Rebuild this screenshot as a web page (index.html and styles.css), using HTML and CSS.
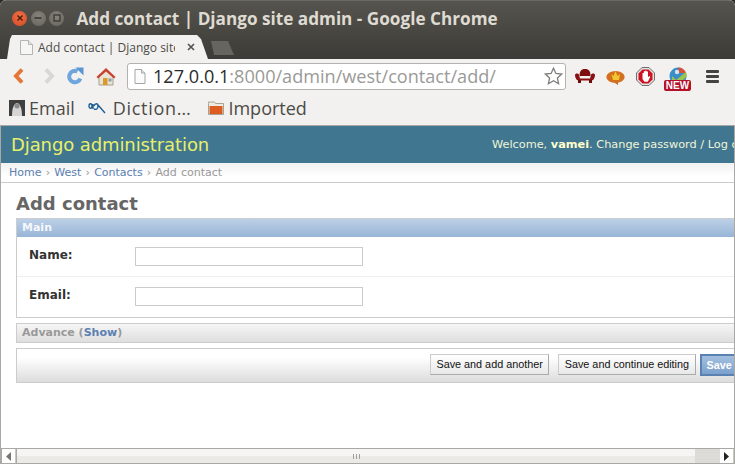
FILE: index.html
```html
<!DOCTYPE html>
<html lang="en">
<head>
    <meta charset="UTF-8">
    <title>Add contact | Django site admin - Google Chrome</title>
    <link rel="stylesheet" href="styles.css">
</head>
<body>
<div class="window">
    <div class="titlebar">
        <span class="win-btn win-close"><svg width="8" height="8" viewBox="0 0 8 8"><path d="M1.5 1.5l5 5M6.5 1.5l-5 5" stroke="#4a1a08" stroke-width="1.4"/></svg></span>
        <span class="win-btn win-other"><svg width="8" height="8" viewBox="0 0 8 8"><path d="M0.5 4h7" stroke="#33322e" stroke-width="1.4"/></svg></span>
        <span class="win-btn win-other"><svg width="8" height="8" viewBox="0 0 8 8"><rect x="1" y="1" width="6" height="6" fill="none" stroke="#33322e" stroke-width="1.2"/></svg></span>
        <span class="win-title">Add contact | Django site admin - Google Chrome</span>
    </div>
    <div class="tabstrip">
        <div class="tab">
            <svg class="page-icon" width="15" height="17" viewBox="0 0 15 17"><path d="M1.5 1.5h8l4 4v10h-12z" fill="#f6f6f5" stroke="#b5b5b2"/><path d="M9.5 1.5v4h4" fill="#e2e2e0" stroke="#b5b5b2"/></svg>
            <span class="tab-title">Add contact | Django site</span>
            <svg class="tab-x" width="8" height="8" viewBox="0 0 8 8"><path d="M1 1l6 6M7 1l-6 6" stroke="#55544f" stroke-width="1.7"/></svg>
        </div>
        <div class="newtab"></div>
    </div>
    <div class="toolbar">
        <svg class="nav-icon" width="14" height="18" viewBox="0 0 14 18"><path d="M10 2.500L4 9l6 6.500" fill="none" stroke="#e5763a" stroke-width="4"/></svg>
        <svg class="nav-icon nav-forward" width="14" height="18" viewBox="0 0 14 18"><path d="M4 2.500L10 9l-6 6.500" fill="none" stroke="#d8d7d4" stroke-width="4"/></svg>
        <svg class="nav-icon nav-reload" width="17" height="18" viewBox="0 0 17 18"><path d="M13.300 11.500A5.700 5.700 0 1 1 10.500 4.500" fill="none" stroke="#6ea5dc" stroke-width="4"/><path d="M8.500 0.500h8v8z" fill="#5b96d2"/></svg>
        <svg class="nav-icon nav-home" width="20" height="19" viewBox="0 0 20 19"><path d="M3 8.500L10 3l7 5.500V18H3z" fill="#e9e4d4" stroke="#a79f8b"/><path d="M7 11h4.500v7H7z" fill="#d99a2b"/><path d="M12.500 11.500h3v3h-3z" fill="#8f9aa3"/><path d="M0.500 10L10 1l9.500 9-1.500 1.500L10 4.500 2 11.500z" fill="#c9412f"/></svg>
        <div class="urlbar">
            <svg class="url-page" width="12" height="15" viewBox="0 0 12 15"><path d="M1 .5h6.500l3.500 3.500v10.500H1z" fill="#fbfbfb" stroke="#a5a5a2"/><path d="M7.500 .5v3.500h3.500" fill="#e6e6e4" stroke="#a5a5a2"/></svg>
            <span class="url-text"><span class="url-host">127.0.0.1</span>:8000/admin/west/contact/add/</span>
            <svg class="url-star" width="19" height="18" viewBox="0 0 19 18"><path d="M9.500 1.200l2.400 5.300 5.800.6-4.300 3.900 1.200 5.700-5.100-2.900-5.100 2.900 1.200-5.700L1.300 7.100l5.800-.6z" fill="#fff" stroke="#7d7d7a" stroke-width="1.300"/></svg>
        </div>
        <div class="ext-icons">
            <svg width="20" height="14" viewBox="0 0 20 14"><path d="M4.500 7C4.500 1 7 0 10 0s5.500 1 5.500 7z" fill="#7d0f0f"/><path d="M0 6c0-2 4-2 4 0l1 3.500h10L16 6c0-2 4-2 4 0 0 2-1 5-3 5.500H3C1 11 0 8 0 6z" fill="#8b1212"/><path d="M3 11h3v3H3zM14 11h3v3h-3z" fill="#6e0b0b"/></svg>
            <svg width="19" height="17" viewBox="0 0 19 17"><ellipse cx="9.500" cy="9" rx="9.200" ry="6" fill="#d3701f"/><path d="M9 15l3 2 0-3z" fill="#c7661c"/><path d="M5.500 6l2 2 2-5 2 5 2.500-2-1 6h-6z" fill="#f3c52e"/></svg>
            <svg width="19" height="19" viewBox="0 0 19 19"><path d="M6 .5h7L18.500 6v7L13 18.500H6L.5 13V6z" fill="#e2e2e2" stroke="#6f6f6f"/><path d="M6.500 2.500h6l4 4v6l-4 4h-6l-4-4v-6z" fill="#cf1020"/><path d="M6.500 9V6h1.300v3V4.300h1.400V9V3.800h1.400V9V4.500h1.400v5.800l1.300-1.300 1 .8-2.400 5H8.500L6.500 12z" fill="#fff"/></svg>
            <span class="ext-new">
                <svg width="20" height="14" viewBox="0 0 20 14"><circle cx="10" cy="9" r="8.500" fill="#3a8dc9"/><path d="M10 .5a8.500 8.500 0 0 1 8 5.500L11 6z" fill="#d7503a"/><path d="M4 9l4 4 10-8 1 4-5 5H4z" fill="#9ec44a"/><circle cx="9" cy="5" r="2.200" fill="#cfe6f5"/></svg>
                <span class="new-label">NEW</span>
            </span>
        </div>
        <div class="menu-btn"><span></span><span></span><span></span></div>
    </div>
    <div class="bookmarks">
        <span class="bookmark">
            <svg width="16" height="16" viewBox="0 0 16 16"><rect width="16" height="16" fill="#3f3f3f"/><path d="M3 16c0-6 1-12 5-13 4 1 5 7 5 13z" fill="#d5d5d5"/><circle cx="8" cy="6" r="2.500" fill="#8a8a8a"/></svg>
            Email
        </span>
        <span class="bookmark bookmark-dict">
            <svg width="18" height="12" viewBox="0 0 18 12"><path d="M1 4c0-3 3-3 3 0s-3 3-3 0zM5 2v5M6 4c1-3 4-3 4 0s-2 4-4 3M10 3l7 8" fill="none" stroke="#1d5f96" stroke-width="1.400"/></svg>
            <span class="dict-label">Diction…</span>
        </span>
        <span class="bookmark bookmark-folder">
            <svg width="16" height="14" viewBox="0 0 16 14"><path d="M.5 2.500V1h6l1 1.500h8v11H.5z" fill="#eeeae2" stroke="#a8a296"/><path d="M1.500 5h13v8h-13z" fill="#dd5c20"/></svg>
            Imported
        </span>
    </div>
    <div class="viewport">
        <div class="page">
            <div class="header">
                <span class="branding">Django administration</span>
                <span class="user-tools">Welcome, <strong>vamei</strong>. Change password / Log out</span>
            </div>
            <div class="breadcrumbs"><a>Home</a> › <a>West</a> › <a>Contacts</a> › Add contact</div>
            <div class="content">
                <h1>Add contact</h1>
                <div class="module">
                    <h2>Main</h2>
                    <div class="form-row">
                        <label>Name:</label>
                        <input type="text">
                    </div>
                    <div class="form-row">
                        <label>Email:</label>
                        <input type="text">
                    </div>
                </div>
                <div class="module collapsed">
                    <h2>Advance (<a>Show</a>)</h2>
                </div>
                <div class="submit-row">
                    <button class="btn">Save and add another</button>
                    <button class="btn">Save and continue editing</button>
                    <button class="btn btn-default">Save</button>
                </div>
            </div>
        </div>
    </div>
    <div class="hscroll">
        <span class="sb-btn"><svg width="7" height="9" viewBox="0 0 7 9"><path d="M6 0v9L1 4.500z" fill="#77756f"/></svg></span>
        <span class="sb-thumb"><i></i><i></i><i></i></span>
        <span class="sb-rest"></span>
        <span class="sb-btn"><svg width="7" height="9" viewBox="0 0 7 9"><path d="M1 0v9l5-4.500z" fill="#222"/></svg></span>
    </div>
</div>
</body>
</html>
```

FILE: styles.css
```css
/* Global styles */
html, body {
    margin: 0;
    padding: 0;
    background: #2c2b28;
    overflow: hidden;
}
.window {
    width: 735px;
    height: 464px;
    display: flex;
    flex-direction: column;
    background: #f2f1ef;
    border-radius: 6px 6px 0 0;
    overflow: hidden;
    font-family: "DejaVu Sans", sans-serif;
}

/* Title bar */
.titlebar {
    height: 35px;
    flex: none;
    box-sizing: border-box;
    padding: 0 0 0 12px;
    display: flex;
    align-items: center;
    background: linear-gradient(#55544f, #46453f);
    border-top: 1px solid #6a6963;
}
.win-btn {
    width: 15px;
    height: 15px;
    border-radius: 50%;
    margin-right: 3.500px;
    display: flex;
    align-items: center;
    justify-content: center;
}
.win-close {
    background: radial-gradient(circle at 50% 35%, #f0714a, #d3481f);
}
.win-other {
    background: radial-gradient(circle at 50% 35%, #85837c, #65635c);
}
.win-title {
    margin-left: 9px;
    font-family: "Open Sans", sans-serif;
    font-weight: 700;
    font-size: 17.160px;
    color: #dfdbd2;
    white-space: nowrap;
}

/* Tabs */
.tabstrip {
    height: 24px;
    flex: none;
    display: flex;
    align-items: flex-end;
    padding-left: 7px;
    background: linear-gradient(#46453f, #3c3b37);
}
.tab {
    width: 201px;
    height: 24px;
    box-sizing: border-box;
    display: flex;
    align-items: center;
    padding: 0 0 0 12px;
    background: #f2f1ef;
    clip-path: polygon(5px 0, 190px 0, 194px 4px, 201px 24px, 0 24px, 3px 4px);
}
.page-icon {
    flex: none;
}
.tab-title {
    margin-left: 4px;
    width: 137px;
    overflow: hidden;
    white-space: nowrap;
    font-family: "Open Sans", sans-serif;
    font-size: 12px;
    color: #4c4b47;
}
.tab-x {
    margin-left: 12px;
}
.newtab {
    width: 25px;
    height: 14px;
    margin: 0 0 4px 1px;
    background: #66655f;
    clip-path: polygon(2px 0, 19px 0, 25px 14px, 5px 14px);
}

/* Toolbar */
.toolbar {
    height: 34px;
    flex: none;
    box-sizing: border-box;
    display: flex;
    align-items: center;
    padding-left: 12px;
}
.nav-icon {
    flex: none;
}
.nav-forward {
    margin-left: 16px;
}
.nav-reload {
    margin-left: 11px;
}
.nav-home {
    margin-left: 12px;
}
.urlbar {
    width: 439px;
    height: 27px;
    box-sizing: border-box;
    margin-left: 11px;
    display: flex;
    align-items: center;
    padding: 0 2px 0 6px;
    background: #fff;
    border: 1px solid #b3b2ae;
    border-radius: 3px;
}
.url-page {
    flex: none;
}
.url-text {
    margin-left: 7px;
    flex: 1;
    font-family: "Open Sans", sans-serif;
    font-size: 18.100px;
    color: #9a9a97;
    white-space: nowrap;
}
.url-host {
    color: #2b2b2b;
}
.ext-icons {
    display: flex;
    align-items: center;
    margin-left: 9px;
    width: 131px;
    gap: 11px;
}
.ext-new {
    position: relative;
    width: 27px;
    height: 22px;
    display: flex;
    justify-content: center;
    margin: 3px 0 0 -2px;
}
.new-label {
    position: absolute;
    left: 0;
    bottom: -2px;
    width: 27px;
    height: 11px;
    border-radius: 2px;
    background: #b5102a;
    color: #fff;
    font-family: "Liberation Sans", sans-serif;
    font-weight: bold;
    font-size: 10px;
    line-height: 11px;
    text-align: center;
}
.menu-btn {
    display: flex;
    flex-direction: column;
    gap: 2px;
}
.menu-btn span {
    display: block;
    width: 13px;
    height: 3px;
    background: #44433f;
    border-radius: 1px;
}

/* Bookmarks */
.bookmarks {
    height: 33px;
    flex: none;
    box-sizing: border-box;
    display: flex;
    align-items: center;
    padding: 0 0 2px 9px;
    font-family: "Open Sans", sans-serif;
    font-size: 18px;
    color: #4c4b47;
    border-bottom: 1px solid #a9a8a4;
}
.bookmark {
    display: flex;
    align-items: center;
    gap: 4px;
    white-space: nowrap;
}
.bookmark-dict {
    margin-left: 13px;
    gap: 7px;
}
.dict-label {
    letter-spacing: 0.7px;
}
.bookmark-folder {
    margin-left: 17px;
}

/* Page */
.viewport {
    flex: 1;
    min-height: 0;
    overflow: hidden;
    background: #fff;
    border-left: 1px solid #a9a8a4;
    border-right: 1px solid #a9a8a4;
}
.page {
    width: 780px;
}
.header {
    height: 37px;
    display: flex;
    align-items: center;
    justify-content: space-between;
    padding: 0 31px 0 10px;
    background: #417690;
    box-sizing: border-box;
}
.branding {
    font-size: 18px;
    letter-spacing: -0.1px;
    color: #e8f06a;
}
.user-tools {
    font-size: 11.300px;
    white-space: nowrap;
    color: #f0f5d8;
}
.user-tools strong {
    color: #ffc;
}
.breadcrumbs {
    height: 20px;
    box-sizing: border-box;
    padding: 3px 0 0 8px;
    font-size: 11px;
    line-height: 13px;
    word-spacing: 0.7px;
    color: #999;
    background: linear-gradient(#f1f1f1, #fff 70%);
    border-bottom: 1px solid #ccc;
}
.breadcrumbs a {
    color: #5b80b2;
}
.content {
    padding: 10px 0 0 15px;
}
h1 {
    margin: 0 0 4px;
    font-size: 18px;
    line-height: 21px;
    font-weight: bold;
    color: #666;
}
.module {
    border: 1px solid #ccc;
    margin-bottom: 5px;
}
.module h2 {
    margin: 0;
    height: 18px;
    box-sizing: border-box;
    padding: 2px 5px;
    font-size: 11px;
    line-height: 13px;
    font-weight: bold;
    color: #f4f7fb;
    background: linear-gradient(#bcd0e7, #98b5d6);
}
.form-row {
    height: 40px;
    box-sizing: border-box;
    display: flex;
    align-items: flex-start;
    padding: 10px 0 0 12px;
    border-bottom: 1px solid #eee;
}
.form-row:last-child {
    border-bottom: none;
}
.form-row label {
    width: 106px;
    padding-top: 1px;
    font-size: 12px;
    line-height: 14px;
    font-weight: bold;
    color: #333;
}
.form-row input {
    width: 228px;
    height: 19px;
    box-sizing: border-box;
    margin: 0;
    padding: 0;
    border: 1px solid #ccc;
    background: #fff;
}
.collapsed h2 {
    color: #999;
    background: linear-gradient(#f6f6f6, #dedede);
}
.collapsed a {
    color: #5b80b2;
}
.submit-row {
    height: 35px;
    box-sizing: border-box;
    display: flex;
    align-items: flex-start;
    padding: 5px 0 0 413px;
    gap: 9px;
    border: 1px solid #ccc;
    background: linear-gradient(#fff, #fff 25%, #dcdcdc);
}
.btn {
    height: 21px;
    margin: 0;
    padding: 0 5.500px 2px;
    font-family: "Liberation Sans", sans-serif;
    font-size: 10.800px;
    color: #111;
    white-space: nowrap;
    background: linear-gradient(#fff, #e8e8e8);
    border: 1px solid #ccc;
    border-right-color: #aaa;
    border-bottom-color: #aaa;
}
.btn-default {
    height: 22px;
    margin-left: -5px;
    padding: 0 5px;
    font-weight: bold;
    color: #fff;
    background: linear-gradient(#a3bfdf, #7ba1ce);
    border: 2px solid #5b80b2;
}

/* Horizontal scroll bar */
.hscroll {
    height: 16px;
    flex: none;
    box-sizing: border-box;
    display: flex;
    padding: 0 1px 0 2px;
    background: #a9a8a4;
    border-top: 1px solid #a9a8a4;
    border-bottom: 1px solid #a9a8a4;
}
.sb-btn {
    width: 13px;
    display: flex;
    align-items: center;
    justify-content: center;
    background: #fff;
    border-right: 1px solid #c9c8c4;
}
.sb-thumb {
    width: 678px;
    margin-left: 1px;
    display: flex;
    align-items: center;
    justify-content: center;
    gap: 2px;
    background: linear-gradient(#f6f5f3 50%, #ebeae7 50%);
}
.sb-thumb i {
    display: block;
    width: 1px;
    height: 5px;
    background: #a09f9b;
}
.sb-rest {
    flex: 1;
    background: #dcdbd8;
}
```
